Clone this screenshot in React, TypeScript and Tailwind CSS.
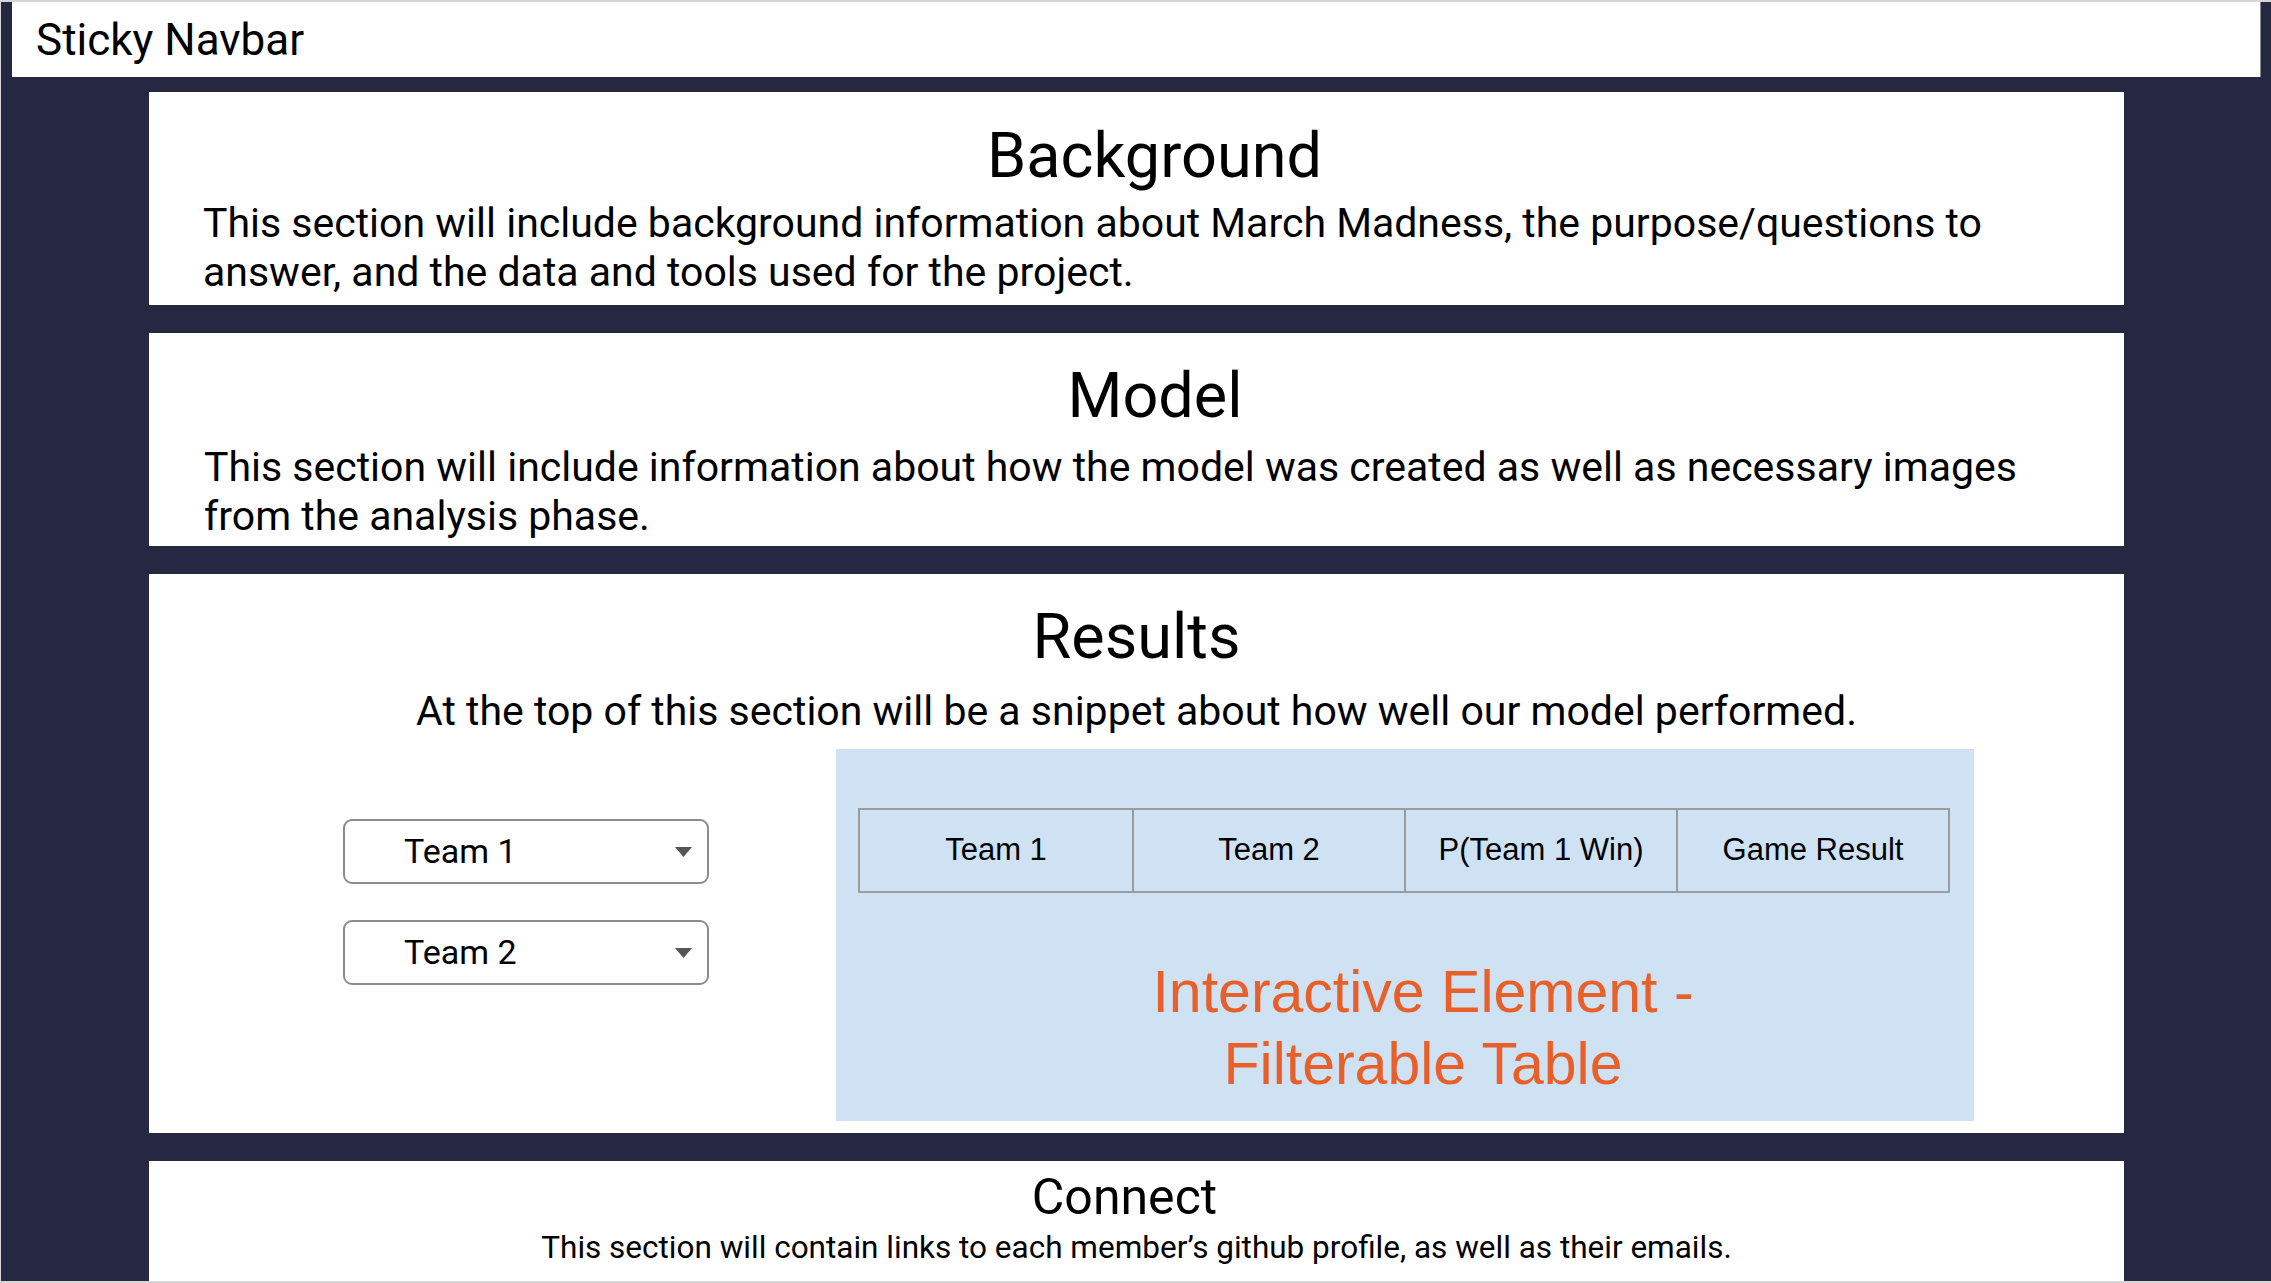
import React from "react";

function Select({ label }: { label: string }) {
  return (
    <div className="relative flex h-[65px] w-[366px] items-center rounded-[9px] border-2 border-[#8c8c8c] bg-white pl-[59px] text-[34px] text-black">
      <span>{label}</span>
      <svg className="absolute right-[15px] top-1/2 -translate-y-1/2" width="17" height="10" viewBox="0 0 17 10">
        <polygon points="0,0 17,0 8.5,10" fill="#555555" />
      </svg>
    </div>
  );
}

export default function App() {
  const headers = ["Team 1", "Team 2", "P(Team 1 Win)", "Game Result"];
  return (
    <div className="h-[1283px] overflow-hidden border-t-2 border-l border-b-2 border-[#d6d6d6] bg-[#252840] font-['Roboto',sans-serif] text-black">
      <div className="ml-[11px] mr-[10px] flex h-[75px] items-center border-r border-[#8a8a8a] bg-white pl-[24px] text-[44px]">
        Sticky Navbar
      </div>
      <div className="ml-[148px] mt-[15px] flex w-[1975px] flex-col gap-[28px]">
        <section className="h-[213px] bg-white pl-[54px] pr-[18px] pt-[27px]">
          <h2 className="text-center text-[63px] leading-[74px]">Background</h2>
          <p className="mt-[6px] text-[41px] leading-[49px]">
            This section will include background information about March Madness, the purpose/questions to
            <br />
            answer, and the data and tools used for the project.
          </p>
        </section>
        <section className="h-[213px] bg-white pl-[55px] pr-[18px] pt-[26px]">
          <h2 className="text-center text-[63px] leading-[74px]">Model</h2>
          <p className="mt-[10px] text-[41px] leading-[49px]">
            This section will include information about how the model was created as well as necessary images
            <br />
            from the analysis phase.
          </p>
        </section>
        <section className="h-[559px] bg-white pt-[26px]">
          <h2 className="text-center text-[63px] leading-[74px]">Results</h2>
          <p className="mt-[13px] text-center text-[41px] leading-[49px]">
            At the top of this section will be a snippet about how well our model performed.
          </p>
          <div className="mt-[13px] flex items-start pl-[194px]">
            <div className="mt-[70px] flex flex-col gap-[36px]">
              <Select label="Team 1" />
              <Select label="Team 2" />
            </div>
            <div className="ml-[127px] h-[372px] w-[1138px] bg-[#cfe2f3] pl-[22px] pr-[24px] pt-[59px] font-['Liberation_Sans',Arial,sans-serif]">
              <div className="grid h-[85px] grid-cols-4 border-2 border-[#9c9c9c]">
                {headers.map((h, i) => (
                  <div
                    key={h}
                    className={`flex items-center justify-center text-[31px] ${i > 0 ? "border-l-2 border-[#9c9c9c]" : ""}`}
                  >
                    {h}
                  </div>
                ))}
              </div>
              <div className="mt-[63px] pl-[38px] text-center text-[59px] leading-[72px] text-[#e95f2a]">
                Interactive Element -
                <br />
                Filterable Table
              </div>
            </div>
          </div>
        </section>
        <section className="h-[200px] bg-white pt-[6px]">
          <h2 className="pr-[24px] text-center text-[50px] leading-[60px]">Connect</h2>
          <p className="mt-[2px] text-center text-[31.5px] leading-[38px]">
            This section will contain links to each member’s github profile, as well as their emails.
          </p>
        </section>
      </div>
    </div>
  );
}
